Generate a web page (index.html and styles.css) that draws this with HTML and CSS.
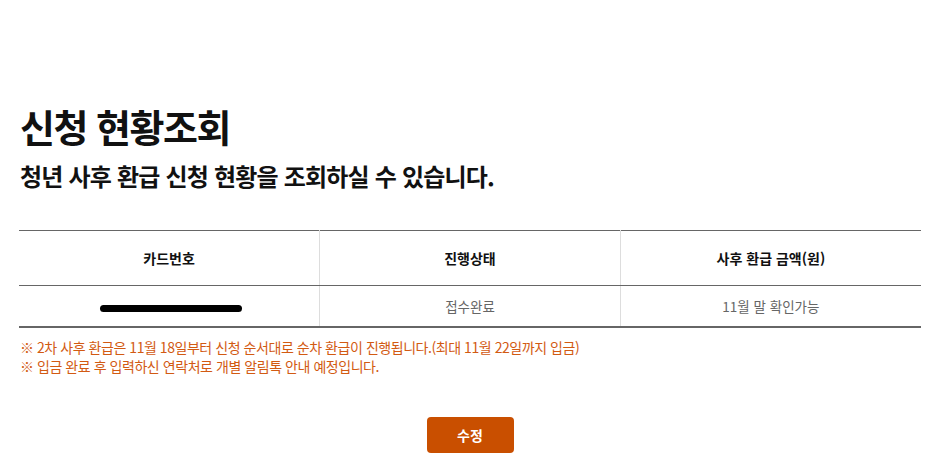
FILE: index.html
```html
<!DOCTYPE html>
<html lang="ko">
<head>
  <meta charset="UTF-8" />
  <meta name="viewport" content="width=device-width, initial-scale=1" />
  <title>신청 현황조회</title>
  <link rel="stylesheet" href="styles.css">
</head>
<body>
  <div class="page">
    <h1 class="title">신청 현황조회</h1>
    <h2 class="subtitle">청년 사후 환급 신청 현황을 조회하실 수 있습니다.</h2>

    <!-- 신청 현황 테이블 -->
    <table class="status-table">
      <thead>
        <tr>
          <th>카드번호</th>
          <th>진행상태</th>
          <th>사후 환급 금액(원)</th>
        </tr>
      </thead>
      <tbody>
        <tr>
          <td><span class="masked"></span></td>
          <td>접수완료</td>
          <td>11월 말 확인가능</td>
        </tr>
      </tbody>
    </table>

    <ul class="notes">
      <li>※ 2차 사후 환급은 11월 18일부터 신청 순서대로 순차 환급이 진행됩니다.(최대 11월 22일까지 입금)</li>
      <li>※ 입금 완료 후 입력하신 연락처로 개별 알림톡 안내 예정입니다.</li>
    </ul>

    <div class="actions">
      <button class="btn-edit">수정</button>
    </div>
  </div>
</body>
</html>
```

FILE: styles.css
```css
body {
  margin: 0;
  font-family: "Noto Sans CJK KR", "Noto Sans", sans-serif;
  background: #fff;
  color: #111;
}
.page {
  padding: 98px 18px 0 19px;
}
.title {
  margin: 0;
  font-size: 38px;
  font-weight: 700;
  letter-spacing: -1.5px;
  line-height: 56px;
  padding-left: 1px;
}
.subtitle {
  margin: 4px 0 0;
  font-size: 24px;
  font-weight: 700;
  letter-spacing: -0.8px;
  line-height: 36px;
  padding-left: 1px;
}
.status-table {
  width: 100%;
  margin-top: 36px;
  table-layout: fixed;
  border-collapse: collapse;
  border-top: 1px solid #666;
  border-bottom: 2px solid #666;
  font-size: 13.5px;
}
.status-table th,
.status-table td {
  text-align: center;
  border-left: 1px solid #ddd;
  padding: 0;
}
.status-table th:first-child,
.status-table td:first-child {
  border-left: none;
}
.status-table th {
  height: 54px;
  font-size: 14px;
  font-weight: 700;
  color: #111;
  border-bottom: 1px solid #666;
}
.status-table td {
  height: 40px;
  color: #666;
  border-bottom: 1px solid #ccc;
}
.masked {
  display: inline-block;
  width: 142px;
  height: 7px;
  background: #000;
  border-radius: 4px;
  vertical-align: middle;
  margin-left: 3px;
}
.notes {
  list-style: none;
  margin: 10px 0 0;
  padding: 0 0 0 1px;
  color: #d25a12;
  font-size: 14px;
  line-height: 19px;
  letter-spacing: -0.45px;
}
.actions {
  text-align: center;
  margin-top: 41px;
}
.btn-edit {
  width: 87px;
  height: 36px;
  border: none;
  border-radius: 4px;
  background: #c94f00;
  color: #fff;
  font-family: inherit;
  font-size: 14px;
  font-weight: 700;
  cursor: pointer;
}
```
